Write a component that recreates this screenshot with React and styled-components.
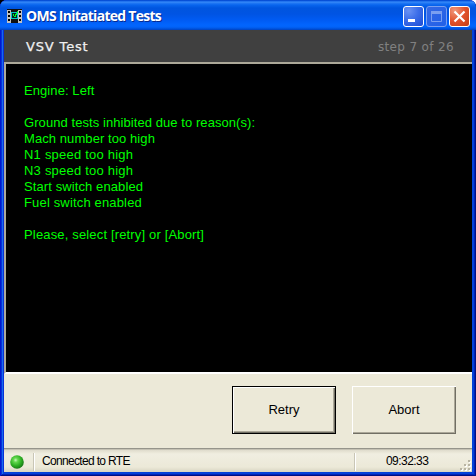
import React from 'react';
import styled, { createGlobalStyle } from 'styled-components';

const GlobalStyle = createGlobalStyle`
  * { box-sizing: border-box; }
  body { margin: 0; background: linear-gradient(90deg, #000 50%, #fff 50%); overflow: hidden; }
`;

const Window = styled.main`
  width: 476px;
  height: 476px;
  display: flex;
  flex-direction: column;
  padding: 0 4px 4px;
  border-radius: 7px 7px 0 0;
  background: #0831d9;
  box-shadow: inset 1px 0 #0019cf, inset -1px -1px #001083, inset 2px 0 #0831d9, inset -2px -2px #0024b7, inset 3px 0 #166aee, inset -4px -4px #0441d8;
  font-family: "Liberation Sans", Arial, sans-serif;
`;

const TitleBar = styled.header`
  height: 30px;
  flex: none;
  margin: 0 -4px;
  padding: 3px 6px 0 7px;
  display: flex;
  align-items: center;
  border-radius: 7px 7px 0 0;
  background: linear-gradient(#0344c9 0, #0b5be5 1px, #3a8df8 2px, #2379f4 3px, #0865ee 5px, #0055df 8px, #0054e3 14px, #005bf3 20px, #0265fe 25px, #0263f8 27px, #0050d7 29px, #0040bd 30px);
`;

const Title = styled.h1`
  margin: -1px auto 0 4px;
  color: #fff;
  font: 700 14px/20px "Open Sans", "Noto Sans", sans-serif;
  letter-spacing: -0.73px;
  text-shadow: 1px 1px #062b91;
  white-space: nowrap;
`;

const Controls = styled.div`
  display: flex;
  gap: 2px;
`;

const fills = {
  normal: 'radial-gradient(circle at 25% 20%, #6a92f3 0, #3c6ee9 45%, #1c4bd4 100%)',
  disabled: 'linear-gradient(135deg, #3568e4, #2160e8)',
  close: 'radial-gradient(circle at 25% 20%, #f0977c 0, #e1522b 50%, #c33d13 100%)',
};

const ControlButton = styled.button`
  width: 21px;
  height: 21px;
  padding: 0;
  border: 1px solid ${({ $kind }) => ($kind === 'disabled' ? '#7a9ff0' : '#fff')};
  border-radius: 3px;
  background: ${({ $kind }) => fills[$kind]};
  svg { display: block; }
`;

const StepHeader = styled.section`
  height: 32px;
  flex: none;
  display: flex;
  justify-content: space-between;
  align-items: center;
  padding: 1px 18px 0 22px;
  background: #404040;
  font: 13px/18px "DejaVu Sans", Verdana, sans-serif;
`;

const StepName = styled.span`
  color: #f0f0f0;
  letter-spacing: 0.85px;
  -webkit-text-stroke: 0.25px #f0f0f0;
`;

const StepCount = styled.span`
  color: #808080;
  font-size: 12px;
  letter-spacing: 0.35px;
`;

const Console = styled.section`
  height: 312px;
  flex: none;
  padding: 19px 18px;
  border-top: 2px solid #aca899;
  border-left: 2px solid #aca899;
  border-bottom: 2px solid #fff;
  background: #000;
  color: #00ff00;
  font-size: 13px;
`;

const Line = styled.div`
  height: 16px;
  line-height: 16px;
  white-space: pre;
  letter-spacing: ${({ $spacing = 0 }) => $spacing}px;
`;

const Actions = styled.section`
  height: 74px;
  flex: none;
  display: flex;
  justify-content: flex-end;
  align-items: flex-start;
  gap: 16px;
  padding: 12px 16px 0 0;
  background: #ece9d8;
`;

const ActionButton = styled.button`
  width: 104px;
  height: 48px;
  padding: 0 0 1px;
  border: ${({ $primary }) => ($primary ? '1px solid #000' : '0')};
  border-radius: 0;
  background: #ece9d8;
  box-shadow: inset 1px 1px #fff, inset -1px -1px #716f64, inset -2px -2px #aca899;
  color: #000;
  font: 13px/16px "Liberation Sans", Arial, sans-serif;
`;

const StatusBar = styled.footer`
  height: 24px;
  flex: none;
  display: flex;
  align-items: center;
  background: linear-gradient(#96958b 0, #96958b 1px, #c5c2b4 1px, #c5c2b4 2px, #dedbcc 2px, #e8e5d6 4px, #f0eee1 6px, #ece9d8 19px, #d8d5c2 24px);
  font-size: 12px;
`;

const StatusIcon = styled.div`
  width: 31px;
  height: 18px;
  margin-top: 3px;
  padding-left: 6px;
  border-right: 1px solid #fff;
  box-shadow: inset -1px 0 #c9c6b6;
  display: flex;
  align-items: center;
`;

const StatusText = styled.span`
  flex: 1;
  padding: 2px 0 0 7px;
  line-height: 16px;
  letter-spacing: -0.67px;
`;

const Clock = styled.time`
  width: 118px;
  height: 18px;
  margin-top: 3px;
  padding-left: 31px;
  border-left: 1px solid #c9c6b6;
  box-shadow: inset 1px 0 #fff;
  line-height: 17px;
  letter-spacing: -0.55px;
`;

const Grip = styled.svg`
  position: absolute;
  left: 460px;
  top: 460px;
`;

const messages = [
  ['Engine: Left', 0.08], ['', 0],
  ['Ground tests inhibited due to reason(s):', 0.07],
  ['Mach number too high', 0.08], ['N1 speed too high', 0.22],
  ['N3 speed too high', 0.22], ['Start switch enabled', 0.1],
  ['Fuel switch enabled', 0.16], ['', 0],
  ['Please, select [retry] or [Abort]', 0.16],
];

function AppIcon() {
  return (
    <svg width="15" height="16" viewBox="0 0 15 16" shapeRendering="crispEdges">
      <path fill="#101010" d="M0 0h15v14H0z" />
      <path fill="#c0c0c0" d="M0 1h4v13H0zm11 0h4v13h-4z" />
      <path fill="#000" d="M1 2h2v2H1zm0 4h2v2H1zm0 4h2v2H1zm11-8h2v2h-2zm0 4h2v2h-2zm0 4h2v2h-2z" />
      <path fill="#00c8c8" d="M4 3h7v7H4z" />
      <path fill="#001c20" d="M5 4h5v5H5z" />
      <path fill="#00ff20" d="M10 2h1v2h-1zM9 4h1v2H9zM8 5h1v3H8zM6 5h1v2H6zM7 7h1v1H7z" />
    </svg>
  );
}

function StatusLight() {
  return (
    <svg width="14" height="14" viewBox="0 0 14 14">
      <defs>
        <radialGradient id="light" cx="40%" cy="36%" r="64%">
          <stop offset="0" stopColor="#c9f5bc" />
          <stop offset=".25" stopColor="#63d84e" />
          <stop offset=".65" stopColor="#2daf23" />
          <stop offset="1" stopColor="#187c16" />
        </radialGradient>
      </defs>
      <circle cx="7" cy="7" r="6.8" fill="url(#light)" />
    </svg>
  );
}

export default function App() {
  return (
    <>
      <GlobalStyle />
      <Window>
        <TitleBar>
          <AppIcon />
          <Title>OMS Initatiated Tests</Title>
          <Controls>
            <ControlButton $kind="normal" aria-label="Minimize">
              <svg width="19" height="19"><path fill="#fff" d="M4 12h7v3H4z" /></svg>
            </ControlButton>
            <ControlButton $kind="disabled" aria-label="Maximize" disabled>
              <svg width="19" height="19" fill="none" stroke="#7a9ff0"><path d="M4.5 5v9.5h10V5" /><path strokeWidth="3" d="M4 5.5h11" /></svg>
            </ControlButton>
            <ControlButton $kind="close" aria-label="Close">
              <svg width="19" height="19" stroke="#fff" strokeWidth="2.2"><path d="M4.5 4.5l10 10m0-10l-10 10" /></svg>
            </ControlButton>
          </Controls>
        </TitleBar>
        <StepHeader>
          <StepName>VSV Test</StepName>
          <StepCount>step 7 of 26</StepCount>
        </StepHeader>
        <Console>
          {messages.map(([text, spacing], i) => <Line key={i} $spacing={spacing}>{text}</Line>)}
        </Console>
        <Actions>
          <ActionButton $primary>Retry</ActionButton>
          <ActionButton>Abort</ActionButton>
        </Actions>
        <StatusBar>
          <StatusIcon><StatusLight /></StatusIcon>
          <StatusText>Connected to RTE</StatusText>
          <Clock>09:32:33</Clock>
        </StatusBar>
        <Grip width="11" height="11" shapeRendering="crispEdges">
          <path fill="#fff" d="M9 1h2v2H9zM5 5h2v2H5zm4 0h2v2H9zM1 9h2v2H1zm4 0h2v2H5zm4 0h2v2H9z" />
          <path fill="#b8b4a3" d="M8 0h2v2H8zM4 4h2v2H4zm4 0h2v2H8zM0 8h2v2H0zm4 0h2v2H4zm4 0h2v2H8z" />
        </Grip>
      </Window>
    </>
  );
}
